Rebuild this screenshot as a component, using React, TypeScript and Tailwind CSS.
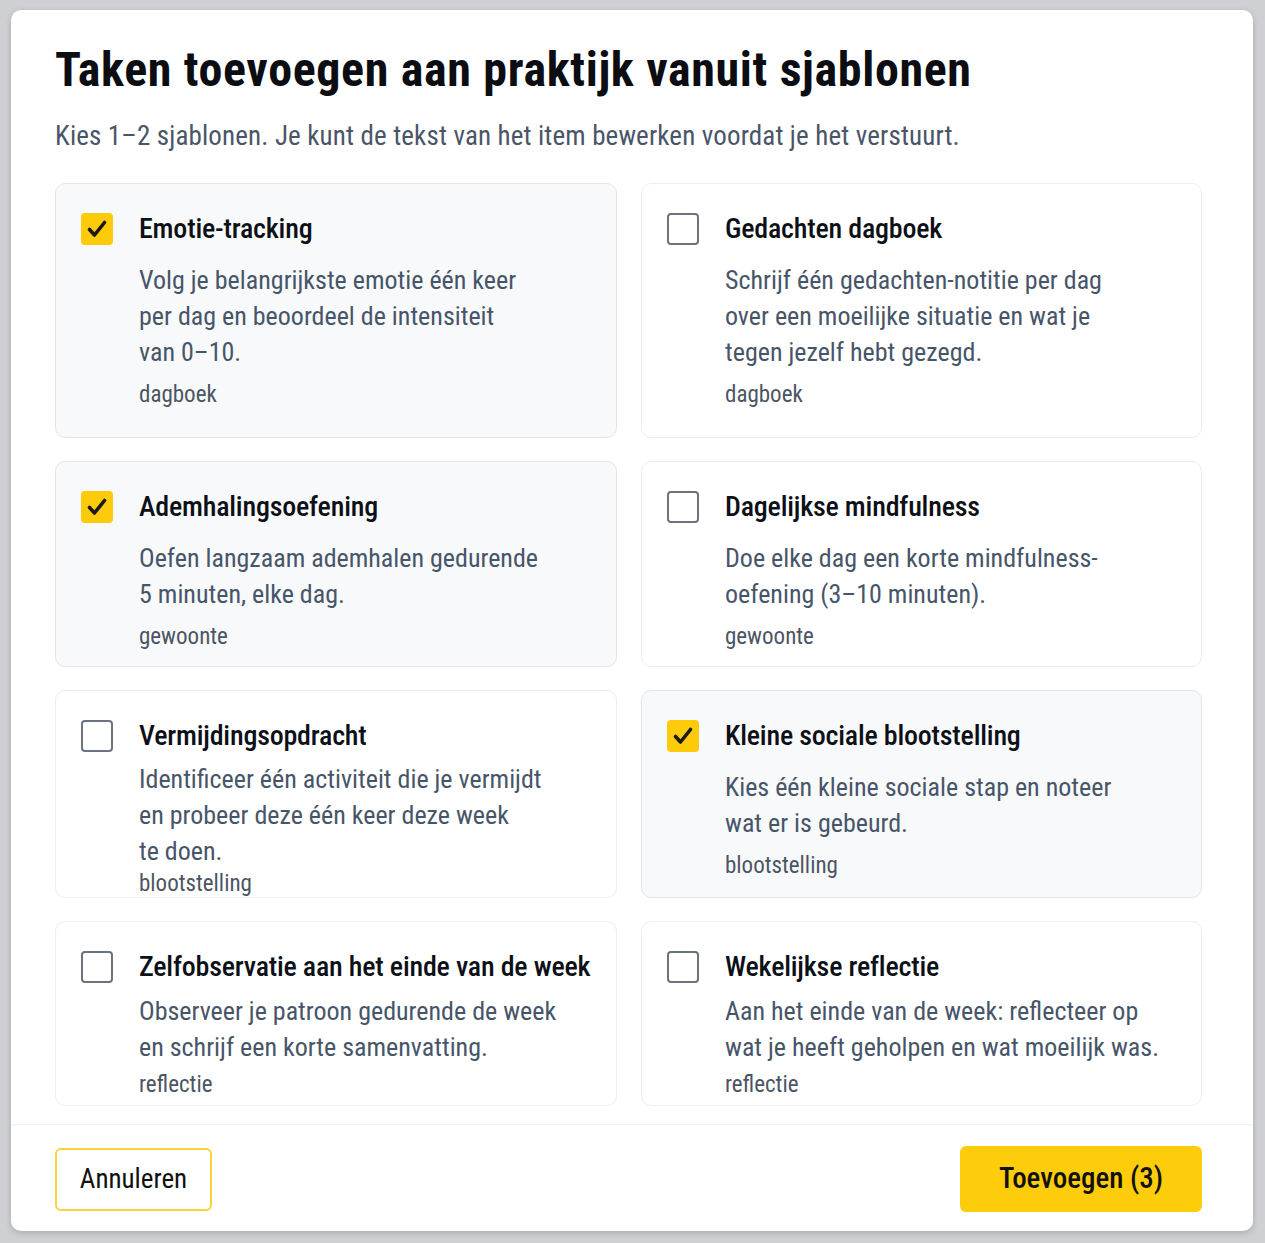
import React, { useState } from "react";

type Template = {
  id: string;
  title: string;
  lines: string[];
  tag: string;
};

const templates: Template[] = [
  {
    id: "emotie",
    title: "Emotie-tracking",
    lines: ["Volg je belangrijkste emotie één keer", "per dag en beoordeel de intensiteit", "van 0–10."],
    tag: "dagboek",
  },
  {
    id: "gedachten",
    title: "Gedachten dagboek",
    lines: ["Schrijf één gedachten-notitie per dag", "over een moeilijke situatie en wat je", "tegen jezelf hebt gezegd."],
    tag: "dagboek",
  },
  {
    id: "adem",
    title: "Ademhalingsoefening",
    lines: ["Oefen langzaam ademhalen gedurende", "5 minuten, elke dag."],
    tag: "gewoonte",
  },
  {
    id: "mindful",
    title: "Dagelijkse mindfulness",
    lines: ["Doe elke dag een korte mindfulness-", "oefening (3–10 minuten)."],
    tag: "gewoonte",
  },
  {
    id: "vermijding",
    title: "Vermijdingsopdracht",
    lines: ["Identificeer één activiteit die je vermijdt", "en probeer deze één keer deze week", "te doen."],
    tag: "blootstelling",
  },
  {
    id: "sociaal",
    title: "Kleine sociale blootstelling",
    lines: ["Kies één kleine sociale stap en noteer", "wat er is gebeurd."],
    tag: "blootstelling",
  },
  {
    id: "zelfobs",
    title: "Zelfobservatie aan het einde van de week",
    lines: ["Observeer je patroon gedurende de week", "en schrijf een korte samenvatting."],
    tag: "reflectie",
  },
  {
    id: "wekelijks",
    title: "Wekelijkse reflectie",
    lines: ["Aan het einde van de week: reflecteer op", "wat je heeft geholpen en wat moeilijk was."],
    tag: "reflectie",
  },
];

function Checkbox({ checked }: { checked: boolean }) {
  if (checked) {
    return (
      <span className="mt-[3px] flex h-[32px] w-[32px] shrink-0 items-center justify-center rounded-[4px] bg-[#fdcb0a]">
        <svg width="32" height="32" viewBox="0 0 32 32" fill="none">
          <path
            d="M8.5 16.5 L13.5 22 L23.5 9.5"
            stroke="#1a1a1a"
            strokeWidth="3.6"
            strokeLinecap="round"
            strokeLinejoin="round"
          />
        </svg>
      </span>
    );
  }
  return (
    <span className="mt-[3px] block h-[32px] w-[32px] shrink-0 rounded-[4px] border-2 border-[#6b7280] bg-white" />
  );
}

function Card({ t, checked, onToggle }: { t: Template; checked: boolean; onToggle: () => void }) {
  return (
    <button
      type="button"
      onClick={onToggle}
      className={
        "flex h-full w-full items-start gap-[26px] rounded-[10px] border pl-[25px] pt-[26px] text-left " +
        (checked ? "border-[#e3e5e8] bg-[#f8f9fa]" : "border-[#eceef1] bg-white")
      }
    >
      <Checkbox checked={checked} />
      <div className="flex flex-col self-stretch">
        <div className="text-[28px] font-medium leading-[38px] tracking-[-0.2px] text-[#0d1017]">{t.title}</div>
        <div className="min-h-[6px] max-h-[14px] flex-1" />
        <div className="text-[26px] leading-[36px] text-[#475569]">
          {t.lines.map((l, i) => (
            <div key={i} className="whitespace-nowrap">
              {l}
            </div>
          ))}
        </div>
        <div className="min-h-[2px] max-h-[12px] flex-1" />
        <div className="text-[23px] leading-[26px] text-[#4b5563]">{t.tag}</div>
        <div className="max-h-[40px] flex-1" />
      </div>
    </button>
  );
}

export default function App() {
  const [selected, setSelected] = useState<string[]>(["emotie", "adem", "sociaal"]);
  const toggle = (id: string) =>
    setSelected((s) => (s.includes(id) ? s.filter((x) => x !== id) : [...s, id]));

  return (
    <div className="min-h-screen bg-[#cfd0d3] pl-[11px] pt-[10px] font-['Roboto_Condensed','Roboto',sans-serif]">
      <div className="w-[1242px] overflow-hidden rounded-[10px] bg-white shadow-[0_2px_6px_rgba(0,0,0,0.18)]">
        <div className="pl-[44px] pr-[51px] pt-[32px]">
          <h1 className="text-[48px] font-bold leading-[56px] tracking-[0.65px] text-[#0b0d12]">
            Taken toevoegen aan praktijk vanuit sjablonen
          </h1>
          <p className="mt-[22px] text-[27px] leading-[32px] tracking-[0.15px] text-[#4a5568]">
            Kies 1–2 sjablonen. Je kunt de tekst van het item bewerken voordat je het verstuurt.
          </p>
          <div className="mt-[31px] mb-[18px] grid grid-cols-[562px_561px] grid-rows-[255px_206px_208px_185px] gap-x-[24px] gap-y-[23px]">
            {templates.map((t) => (
              <Card key={t.id} t={t} checked={selected.includes(t.id)} onToggle={() => toggle(t.id)} />
            ))}
          </div>
        </div>
        <div className="flex items-center justify-between border-t border-[#eef0f2] pb-[19px] pl-[44px] pr-[51px] pt-[21px]">
          <button
            type="button"
            className="flex h-[63px] w-[157px] items-center justify-center rounded-[6px] border-2 border-[#f9d33a] bg-white text-[27px] font-normal text-[#111]"
          >
            Annuleren
          </button>
          <button
            type="button"
            className="flex h-[66px] w-[242px] items-center justify-center rounded-[6px] bg-[#fdcc0b] text-[29px] font-medium text-[#111]"
          >
            Toevoegen ({selected.length})
          </button>
        </div>
      </div>
    </div>
  );
}
